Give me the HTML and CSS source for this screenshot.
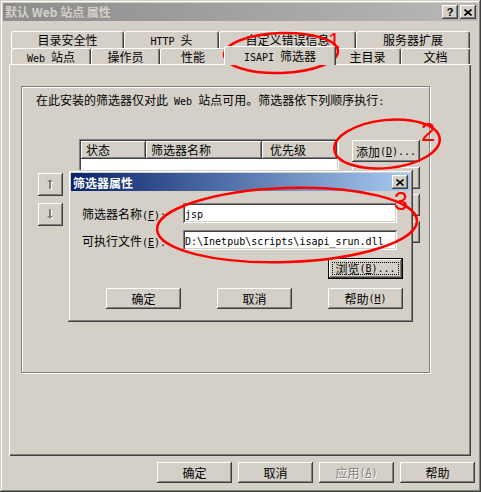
FILE: index.html
```html
<!DOCTYPE html>
<html lang="zh-CN">
<head>
    <meta charset="UTF-8">
    <meta name="viewport" content="width=device-width, initial-scale=1.0">
    <title>默认 Web 站点 属性</title>
    <link rel="stylesheet" href="styles.css">
</head>
<body>
    <div class="window">
        <div class="titlebar">
            <span class="title">默认 Web 站点 属性</span>
            <div class="caption-btns">
                <span class="cap-btn">?</span>
                <span class="cap-btn">
                    <svg width="8" height="7" viewBox="0 0 8 7"><path d="M0.5 0.5L7.5 6.5M7.5 0.5L0.5 6.5" stroke="#000" stroke-width="1.6" fill="none"/></svg>
                </span>
            </div>
        </div>

        <div class="tabs">
            <div class="tab-row back">
                <div class="tab t-security">目录安全性</div>
                <div class="tab t-http"><span class="lat">HTTP </span>头</div>
                <div class="tab t-errors">自定义错误信息</div>
                <div class="tab t-ext">服务器扩展</div>
            </div>
            <div class="tab-row front">
                <div class="tab t-site"><span class="lat">Web </span>站点</div>
                <div class="tab t-ops">操作员</div>
                <div class="tab t-perf">性能</div>
                <div class="tab t-isapi active"><span class="lat">ISAPI </span>筛选器</div>
                <div class="tab t-home">主目录</div>
                <div class="tab t-docs">文档</div>
            </div>
        </div>

        <div class="panel">
            <div class="group">
                <p class="intro">在此安装的筛选器仅对此<span class="lat"> Web </span>站点可用。筛选器依下列顺序执行<span class="lat">:</span></p>
                <div class="filter-area">
                    <div class="order-btns">
                        <span class="order-btn">
                            <svg width="9" height="13" viewBox="0 0 9 13">
                                <path d="M5 2L8 5H6V12H4V5H2Z" fill="#fff"/>
                                <path d="M4 1L7 4H5V11H3V4H1Z" fill="#808080"/>
                            </svg>
                        </span>
                        <span class="order-btn">
                            <svg width="9" height="13" viewBox="0 0 9 13">
                                <path d="M5 12L8 9H6V2H4V9H2Z" fill="#fff"/>
                                <path d="M4 11L7 8H5V1H3V8H1Z" fill="#808080"/>
                            </svg>
                        </span>
                    </div>
                    <div class="list">
                        <div class="list-head">
                            <span class="col c-state">状态</span>
                            <span class="col c-name">筛选器名称</span>
                            <span class="col c-prio">优先级</span>
                        </div>
                    </div>
                    <!-- the lower three buttons sit under the dialog, only their edges show -->
                    <div class="side-btns">
                        <span class="btn">添加<span class="lat">(<u>D</u>)...</span></span>
                        <span class="btn"></span>
                        <span class="btn"></span>
                        <span class="btn"></span>
                    </div>
                </div>
            </div>
        </div>

        <div class="footer">
            <span class="btn">确定</span>
            <span class="btn">取消</span>
            <span class="btn disabled">应用<span class="lat">(<u>A</u>)</span></span>
            <span class="btn">帮助</span>
        </div>

        <div class="dialog">
            <div class="dlg-title">
                <span>筛选器属性</span>
                <span class="cap-btn">
                    <svg width="8" height="7" viewBox="0 0 8 7"><path d="M0.5 0.5L7.5 6.5M7.5 0.5L0.5 6.5" stroke="#000" stroke-width="1.6" fill="none"/></svg>
                </span>
            </div>
            <div class="dlg-body">
                <div class="field">
                    <label>筛选器名称<span class="lat">(<u>F</u>):</span></label>
                    <div class="input"><span class="lat">jsp</span></div>
                </div>
                <div class="field">
                    <label>可执行文件<span class="lat">(<u>E</u>):</span></label>
                    <div class="input"><span class="lat">D:\Inetpub\scripts\isapi_srun.dll</span></div>
                </div>
                <div class="browse-row">
                    <span class="btn default"><span class="focus">浏览<span class="lat">(<u>B</u>)...</span></span></span>
                </div>
                <div class="dlg-actions">
                    <span class="btn">确定</span>
                    <span class="btn">取消</span>
                    <span class="btn">帮助<span class="lat">(<u>H</u>)</span></span>
                </div>
            </div>
        </div>

        <svg class="marks" width="481" height="492" viewBox="0 0 481 492">
            <g fill="none" stroke="#f00" stroke-width="2.5">
                <ellipse cx="281" cy="53" rx="57" ry="20" transform="rotate(-2 281 53)"/>
                <ellipse cx="387" cy="144" rx="53" ry="24" transform="rotate(-6 387 144)"/>
                <ellipse cx="287" cy="225" rx="130" ry="37" transform="rotate(-2 287 225)"/>
            </g>
            <g fill="#f00" font-family="Liberation Sans, sans-serif">
                <text x="328" y="48" font-size="22">1</text>
                <text x="421" y="141" font-size="26">2</text>
                <text x="394" y="210" font-size="25">3</text>
            </g>
        </svg>
    </div>
</body>
</html>
```

FILE: styles.css
```css
* {
    box-sizing: border-box;
}
body {
    margin: 0;
    background: #d4d0c8;
    font-family: "Noto Sans CJK SC", "Liberation Sans", sans-serif;
    font-size: 12px;
    color: #000;
}
.lat {
    font-family: "DejaVu Sans Mono", "Liberation Mono", monospace;
    font-size: 10px;
    white-space: pre;
}
.window {
    position: relative;
    width: 481px;
    height: 492px;
    padding: 3px;
    background: #d4d0c8;
    box-shadow: inset -1px -1px #404040, inset 1px 1px #d4d0c8, inset -2px -2px #808080, inset 2px 2px #fff;
}
.titlebar {
    display: flex;
    align-items: center;
    justify-content: space-between;
    height: 18px;
    padding: 0 2px;
    background: linear-gradient(to right, #8c8c8c, #b8b8b8);
}
.title {
    color: #d4d0c8;
    font-weight: bold;
    line-height: 18px;
}
.caption-btns {
    display: flex;
    gap: 2px;
}
.cap-btn {
    display: flex;
    align-items: center;
    justify-content: center;
    width: 16px;
    height: 14px;
    background: #d4d0c8;
    font: bold 11px "Liberation Sans", sans-serif;
    box-shadow: inset -1px -1px #404040, inset 1px 1px #fff, inset -2px -2px #808080;
}

/* tabs */
.tabs {
    margin-top: 10px;
    padding-left: 8px;
}
.tab-row {
    display: flex;
}
.tab-row.back {
    height: 17px;
}
.tab-row.front {
    height: 16px;
}
.tab {
    height: 100%;
    text-align: center;
    line-height: 15px;
    background: #d4d0c8;
    border-top: 1px solid #fff;
    border-left: 1px solid #fff;
    border-right: 1px solid #404040;
    box-shadow: inset -1px 0 #808080;
    border-radius: 3px 3px 0 0;
    white-space: nowrap;
}
.t-security { width: 113px; }
.t-http { width: 95px; }
.t-errors { width: 137px; }
.t-ext { width: 114px; }
.t-site { width: 80px; }
.t-ops { width: 69px; }
.t-perf { width: 66px; }
.t-isapi { width: 108px; }
.t-home { width: 67px; }
.t-docs { width: 69px; }
.tab.active {
    position: relative;
    z-index: 1;
    height: 19px;
    margin: -2px -2px -1px;
    width: 112px;
    line-height: 17px;
}

/* panel */
.panel {
    margin-left: 6px;
    width: 462px;
    height: 392px;
    padding: 21px 0 0 11px;
    border-top: 1px solid #fff;
    border-left: 1px solid #fff;
    box-shadow: inset -1px -1px #404040, inset -2px -2px #808080;
}
.group {
    width: 409px;
    height: 287px;
    padding: 6px 0 0 14px;
    border: 1px solid #808080;
    box-shadow: 1px 1px #fff, inset 1px 1px #fff;
}
.intro {
    margin: 0;
    line-height: 14px;
    white-space: nowrap;
}
.filter-area {
    display: flex;
    align-items: flex-start;
    margin-top: 30px;
}
.order-btns {
    display: flex;
    flex-direction: column;
    gap: 7px;
    margin: 34px 0 0 2px;
}
.order-btn {
    display: flex;
    align-items: center;
    justify-content: center;
    width: 25px;
    height: 23px;
    box-shadow: inset -1px -1px #404040, inset 1px 1px #fff, inset -2px -2px #808080, inset 2px 2px #d4d0c8;
}
.list {
    width: 260px;
    height: 165px;
    margin-left: 16px;
    padding: 2px;
    background: #fff;
    box-shadow: inset 1px 1px #808080, inset -1px -1px #fff, inset 2px 2px #404040, inset -2px -2px #d4d0c8;
}
.list-head {
    display: flex;
    height: 18px;
}
.col {
    height: 18px;
    padding-left: 5px;
    line-height: 18px;
    background: #d4d0c8;
    box-shadow: inset -1px -1px #404040, inset 1px 1px #fff, inset -2px -2px #808080;
}
.c-state { width: 65px; }
.c-name { width: 116px; }
.c-prio { flex: 1; padding-left: 8px; }
.side-btns {
    display: flex;
    flex-direction: column;
    gap: 5px;
    margin: 1px 0 0 13px;
}
.side-btns .btn {
    width: 68px;
    height: 22px;
}

/* buttons */
.btn {
    display: flex;
    align-items: center;
    justify-content: center;
    width: 75px;
    height: 21px;
    background: #d4d0c8;
    white-space: nowrap;
    box-shadow: inset -1px -1px #404040, inset 1px 1px #fff, inset -2px -2px #808080, inset 2px 2px #d4d0c8;
}
.btn.disabled {
    color: #808080;
    text-shadow: 1px 1px #fff;
}
.btn.default {
    border: 1px solid #000;
    padding: 3px;
}
.focus {
    display: flex;
    align-items: center;
    justify-content: center;
    width: 100%;
    height: 100%;
    border: 1px dotted #000;
}
.footer {
    display: flex;
    justify-content: flex-end;
    gap: 6px;
    margin-top: 6px;
    padding-right: 3px;
}

/* overlay dialog */
.dialog {
    position: absolute;
    left: 68px;
    top: 170px;
    width: 345px;
    height: 152px;
    padding: 3px;
    background: #d4d0c8;
    box-shadow: inset -1px -1px #404040, inset 1px 1px #d4d0c8, inset -2px -2px #808080, inset 2px 2px #fff;
}
.dlg-title {
    display: flex;
    align-items: center;
    justify-content: space-between;
    height: 18px;
    padding: 0 2px 0 2px;
    color: #fff;
    font-weight: bold;
    background: linear-gradient(to right, #0a246a, #a6caf0);
}
.dlg-body {
    padding: 12px 7px 0 11px;
}
.field {
    display: flex;
    align-items: center;
    height: 20px;
}
.field + .field {
    margin-top: 7px;
}
.field label {
    width: 101px;
    white-space: nowrap;
}
.input {
    width: 214px;
    height: 20px;
    padding: 0 2px;
    line-height: 20px;
    background: #fff;
    white-space: nowrap;
    overflow: hidden;
    box-shadow: inset 1px 1px #808080, inset -1px -1px #fff, inset 2px 2px #404040, inset -2px -2px #d4d0c8;
}
.browse-row {
    display: flex;
    justify-content: flex-end;
    margin-top: 8px;
}
.dlg-actions {
    display: flex;
    justify-content: space-between;
    margin-top: 9px;
    padding-left: 24px;
}

.marks {
    position: absolute;
    left: 0;
    top: 0;
    pointer-events: none;
}
```
